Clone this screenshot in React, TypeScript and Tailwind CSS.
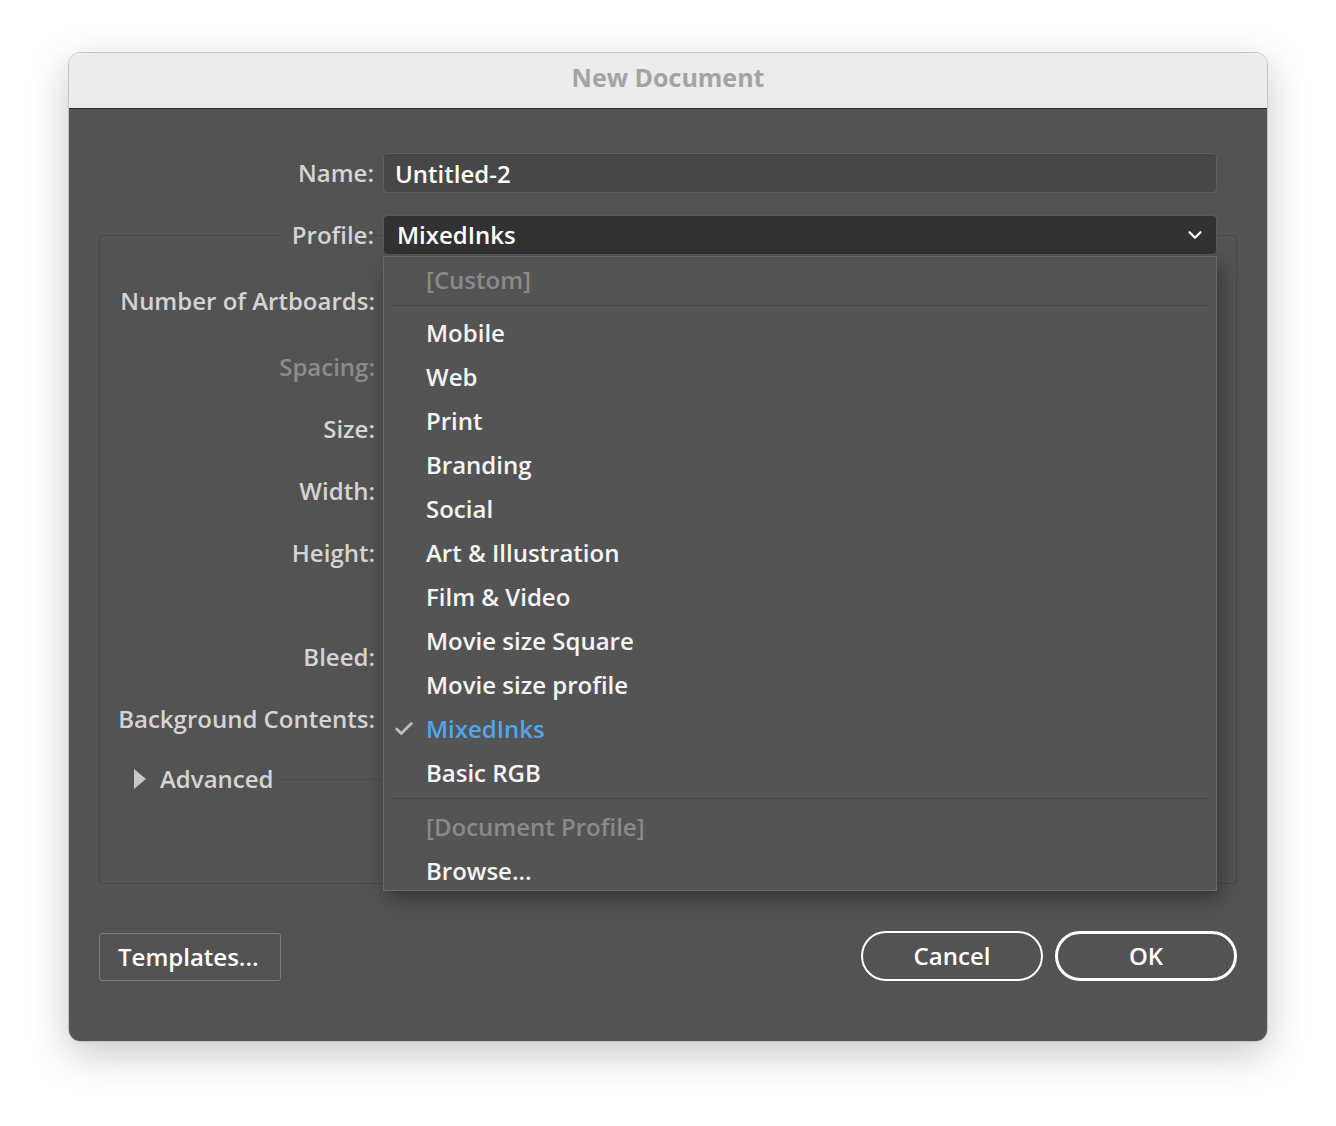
import { FiCheck, FiChevronDown } from 'react-icons/fi';

const font = { fontFamily: '"Open Sans", "Noto Sans", sans-serif' };

const menuItems = [
	'Mobile',
	'Web',
	'Print',
	'Branding',
	'Social',
	'Art & Illustration',
	'Film & Video',
	'Movie size Square',
	'Movie size profile',
];

const MenuItem = ({ label, dim, active }: { label: string; dim?: boolean; active?: boolean }) => (
	<div className="relative flex items-center h-[44px] pl-[42px] pt-px">
		{active && <FiCheck className="absolute left-[9px] text-[22px] text-[#bdbdbd]" strokeWidth={3} />}
		<span className={dim ? 'text-[#8a8a8a]' : active ? 'text-[#4fa6ec]' : 'text-[#f4f4f4]'}>{label}</span>
	</div>
);

const Row = ({ label, height, dim }: { label: string; height: number; dim?: boolean }) => (
	<div className="flex items-center" style={{ height }}>
		<div className={`w-[275px] text-right ${dim ? 'text-[#8c8c8c]' : 'text-[#d4d4d4]'}`}>{label}</div>
	</div>
);

const ProfileMenu = () => (
	<div className="absolute top-full left-0 right-0 mt-px h-[635px] overflow-hidden bg-[#545454] border border-[#686868] shadow-[4px_8px_18px_rgba(0,0,0,0.35)] z-20 text-[24px]">
		<div>
			<MenuItem label="[Custom]" dim />
			<div className="mx-[7px] my-[4px] h-px bg-[#474747]" />
			{menuItems.map((m) => (
				<MenuItem key={m} label={m} />
			))}
			<MenuItem label="MixedInks" active />
			<MenuItem label="Basic RGB" />
			<div className="mx-[7px] mt-[4px] mb-[5px] h-px bg-[#474747]" />
			<MenuItem label="[Document Profile]" dim />
			<MenuItem label="Browse..." />
		</div>
	</div>
);

const App = () => {
	return (
		<div className="min-h-[1126px] w-[1336px] bg-white pt-[52px] pl-[68px] font-semibold" style={font}>
			<div className="w-[1200px] h-[990px] rounded-[12px] overflow-hidden flex flex-col border border-[#c4c4c4] shadow-[0_12px_40px_rgba(0,0,0,0.22)]">
				<div className="h-[56px] shrink-0 bg-[#ececec] border-b border-[#2e2e2e] flex items-center justify-center">
					<span className="-mt-[5px] text-[25px] font-bold text-[#a3a3a3]">New Document</span>
				</div>

				<div className="flex-1 bg-[#535353] flex flex-col text-[24px]">
					<div className="flex items-center mt-[44px] h-[40px]">
						<div className="w-[305px] text-right text-[#d4d4d4]">Name:</div>
						<div className="ml-[9px] w-[834px] h-[40px] bg-[#474747] border border-[#5f5f5f] rounded-[4px] flex items-center pl-[11px] pt-[2px] text-white">
							Untitled-2
						</div>
					</div>

					<div className="relative z-10 flex items-center mt-[22px] h-[40px]">
						<div className="w-[305px] flex justify-end">
							<span className="bg-[#535353] pl-[10px] text-[#d4d4d4]">Profile:</span>
						</div>
						<div className="relative ml-[9px] w-[834px] h-[40px]">
							<div className="h-full bg-[#323232] border border-[#5a5a5a] rounded-[4px] flex items-center justify-between pl-[13px] pr-[10px] text-white">
								<span>MixedInks</span>
								<FiChevronDown className="text-[22px]" strokeWidth={2.5} />
							</div>
							<ProfileMenu />
						</div>
					</div>

					<div className="ml-[30px] -mt-[20px] w-[1138px] h-[649px] border border-[#484848] rounded-[2px] pt-[43px]">
						<Row label="Number of Artboards:" height={44} />
						<div className="h-[22px]" />
						<Row label="Spacing:" height={44} dim />
						<div className="h-[18px]" />
						<Row label="Size:" height={44} />
						<div className="h-[18px]" />
						<Row label="Width:" height={44} />
						<div className="h-[18px]" />
						<Row label="Height:" height={44} />
						<div className="h-[60px]" />
						<Row label="Bleed:" height={44} />
						<div className="h-[18px]" />
						<Row label="Background Contents:" height={44} />
						<div className="flex items-center h-[44px] mt-[16px] pl-[34px]">
							<svg width="12" height="20" viewBox="0 0 12 20" className="shrink-0">
								<polygon points="0,0 12,10 0,20" fill="#c8c8c8" />
							</svg>
							<span className="ml-[14px] text-[#d4d4d4]">Advanced</span>
							<div className="flex-1 h-px bg-[#4a4a4a] ml-[4px] mr-[20px]" />
						</div>
					</div>

					<div className="flex items-center justify-between ml-[30px] mr-[30px] mt-[47px]">
						<button
							type="button"
							className="w-[182px] h-[48px] mt-[2px] border border-[#7c7c7c] rounded-[3px] text-white text-left pl-[18px]"
						>
							Templates...
						</button>
						<div className="flex gap-[12px]">
							<button type="button" className="w-[182px] h-[50px] rounded-full border-2 border-white text-white">
								Cancel
							</button>
							<button type="button" className="w-[182px] h-[50px] rounded-full border-[3px] border-white text-white">
								OK
							</button>
						</div>
					</div>
				</div>
			</div>
		</div>
	);
};

export default App;
